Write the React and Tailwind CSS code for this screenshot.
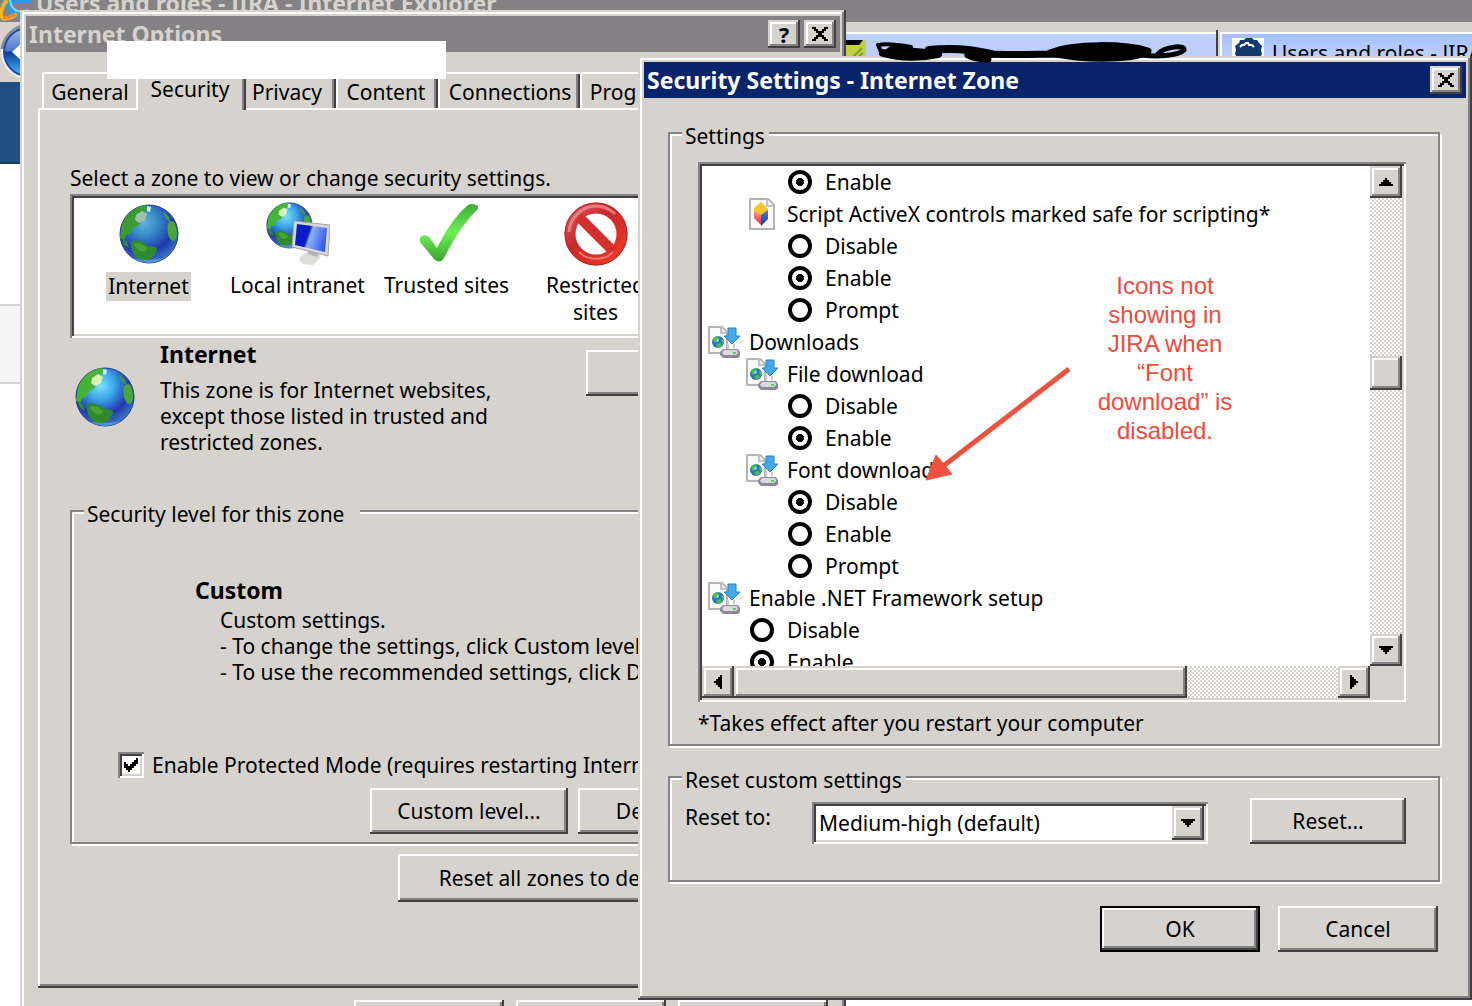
import { clsx } from 'clsx'

const raised = 'bg-[#d6d3ce] shadow-[inset_-2px_-2px_#424142,inset_2px_2px_#d6d3ce,inset_-4px_-4px_#848284,inset_4px_4px_#fff]'
const button = 'bg-[#d6d3ce] shadow-[inset_-2px_-2px_#424142,inset_2px_2px_#fff,inset_-4px_-4px_#848284]'
const sunken = 'shadow-[inset_2px_2px_#848284,inset_-2px_-2px_#fff,inset_4px_4px_#424142,inset_-4px_-4px_#d6d3ce]'
const track = 'bg-[repeating-conic-gradient(#fff_0_25%,#d6d3ce_0_50%)] bg-[length:4px_4px]'

const zones = [
  { name: 'Internet', Icon: Globe, active: true },
  { name: 'Local intranet', Icon: Intranet },
  { name: 'Trusted sites', Icon: Check },
  { name: 'Restricted sites', Icon: NoEntry },
]

const settings = [
  { depth: 2, label: 'Enable', group: 'initialize', checked: true },
  { depth: 1, label: 'Script ActiveX controls marked safe for scripting*', Icon: ActiveXIcon },
  { depth: 2, label: 'Disable', group: 'activex' },
  { depth: 2, label: 'Enable', group: 'activex', checked: true },
  { depth: 2, label: 'Prompt', group: 'activex' },
  { depth: 0, label: 'Downloads', Icon: DownloadIcon },
  { depth: 1, label: 'File download', Icon: DownloadIcon },
  { depth: 2, label: 'Disable', group: 'file' },
  { depth: 2, label: 'Enable', group: 'file', checked: true },
  { depth: 1, label: 'Font download', Icon: DownloadIcon },
  { depth: 2, label: 'Disable', group: 'font', checked: true },
  { depth: 2, label: 'Enable', group: 'font' },
  { depth: 2, label: 'Prompt', group: 'font' },
  { depth: 0, label: 'Enable .NET Framework setup', Icon: DownloadIcon },
  { depth: 1, label: 'Disable', group: 'dotnet' },
  { depth: 1, label: 'Enable', group: 'dotnet', checked: true },
]

const indents = ['pl-[6px]', 'pl-[44px]', 'pl-[82px]']

/* ---------- drawings ---------- */

function GlobeArt({ dim }) {
  const id = dim ? 'sea-dim' : 'sea'
  return (
    <>
      <defs>
        <radialGradient id={id} cx="0.42" cy="0.3" r="0.72">
          <stop offset="0" stopColor={dim ? '#5fb4dc' : '#7be4ff'} />
          <stop offset="0.35" stopColor={dim ? '#3486c4' : '#3aa2e6'} />
          <stop offset="0.7" stopColor="#2038b0" />
          <stop offset="1" stopColor="#3f7cc4" />
        </radialGradient>
      </defs>
      <circle cx="30" cy="30" r="29" fill={`url(#${id})`} stroke="#1f3f86" strokeWidth="1" />
      <path d="M3 21C6 11 15 3 26 1l4 3-5 4 3 5-6 3-2 5-6 3-3 6-4 1-2 5-4-2z" fill={dim ? '#3c9a32' : '#45b436'} />
      <path d="M17 11l6-4 5 3-2 6-6 3-4-3z" fill={dim ? '#a9c6b8' : '#ecf7c4'} opacity="0.9" />
      <path d="M12 38c5-3 11-1 16 3 4 2 9 1 10 4-1 6-7 12-14 12-8-3-13-10-12-19z" fill="#2f8a2e" />
      <path d="M15 40c4-2 9 0 13 4-2 6-10 4-13-4z" fill="#58b53a" opacity="0.6" />
      <path d="M49 19c4-4 7-2 8 4 2 6 1 12-2 14-5 1-8-10-6-18z" fill="#4ba53c" />
      <path d="M45 8l5 5 1 5-4-3-3-6z" fill="#3f9a4a" />
      <path d="M28 2l4 1-1 5-3-1z" fill="#d6ebf2" />
      <path d="M2 33l6 5 2 6-5-3z" fill="#2c8a3a" />
      <path d="M14 54c10 7 23 6 32 0-8 2-22 3-32 0z" fill="#5f9fe0" opacity="0.7" />
    </>
  )
}

function Globe({ dim = true }) {
  return (
    <svg className="w-[60px] h-[60px]" viewBox="0 0 60 60" aria-hidden="true">
      <GlobeArt dim={dim} />
    </svg>
  )
}

function Intranet() {
  return (
    <svg className="w-16 h-16" viewBox="0 0 64 64" aria-hidden="true">
      <defs>
        <linearGradient id="screen" x1="0" x2="1" y1="0.2" y2="0.5">
          <stop offset="0.42" stopColor="#0a1cc8" />
          <stop offset="0.5" stopColor="#8fb2ff" />
          <stop offset="1" stopColor="#3557e8" />
        </linearGradient>
      </defs>
      <g transform="scale(0.78)"><GlobeArt /></g>
      <path d="M35 54l8-5 10 2 1 5-7 7-10-1-4-4z" fill="#dcdcd8" />
      <path d="M42 46l12 3-3 6-9-3z" fill="#b9b6b6" />
      <path d="M28 19l36 4-2 31-36-9z" fill="#d9d6d6" stroke="#a7a2a4" />
      <path d="M31 22l30 4-2 24-30-7z" fill="url(#screen)" />
    </svg>
  )
}

function Check() {
  return (
    <svg className="w-16 h-16" viewBox="0 0 64 64" aria-hidden="true">
      <defs>
        <linearGradient id="tick" x1="0" x2="0" y1="0" y2="1">
          <stop offset="0" stopColor="#3fae34" />
          <stop offset="0.5" stopColor="#6cf058" />
          <stop offset="1" stopColor="#3aa32c" />
        </linearGradient>
      </defs>
      <path d="M5 36c2-4 6-3 9-1l8 11C30 30 40 14 52 4c3-3 8-2 11 0v3C48 21 38 39 29 56c-3 5-7 4-10 1L5 40z" fill="url(#tick)" />
    </svg>
  )
}

function NoEntry() {
  return (
    <svg className="w-16 h-16" viewBox="0 0 64 64" aria-hidden="true">
      <defs>
        <linearGradient id="ban" x1="0" x2="1" y1="0" y2="1">
          <stop offset="0" stopColor="#e0555a" />
          <stop offset="0.4" stopColor="#c8282c" />
          <stop offset="1" stopColor="#f03a24" />
        </linearGradient>
      </defs>
      <circle cx="32" cy="32" r="26" fill="none" stroke="url(#ban)" strokeWidth="11" />
      <path d="M15 15l34 34" stroke="#d42f2e" strokeWidth="10" />
      <circle cx="32" cy="32" r="31" fill="none" stroke="#b3262a" strokeWidth="1" />
      <path d="M5 30C6 16 17 5 31 4c8 0 15 3 20 8" fill="none" stroke="#ee9a9a" strokeWidth="3" opacity="0.7" />
      <path d="M15 50c9 9 25 9 34 0" fill="none" stroke="#f59086" strokeWidth="2" opacity="0.7" />
    </svg>
  )
}

function DownloadIcon() {
  return (
    <svg className="w-8 h-8" viewBox="0 0 32 32" aria-hidden="true">
      <path d="M1 1h13l5 5v21H1z" fill="#fbfbfb" stroke="#b5b5b5" strokeWidth="2" />
      <path d="M13 1v6h6" fill="#eee" stroke="#c4c4c4" strokeWidth="2" />
      <circle cx="10" cy="16" r="6" fill="#2a6fd0" />
      <circle cx="9" cy="14" r="2" fill="#8fd8f8" />
      <path d="M5 14c1-3 4-4 6-4l-2 4-2 3zM8 18l5-1 1 3-4 2zM14 12l2 3-1 3-2-3z" fill="#4cc43a" />
      <path d="M20 2h8v8h4l-8 8-8-8h4z" fill="#45a9ee" stroke="#2b84c8" />
      <path d="M20 18v5M26 18v4" stroke="#c9c9d2" strokeWidth="2" />
      <path d="M15 23h15l2 3v4l-2 2H15l-3-3v-3z" fill="#8d8a98" />
      <path d="M16 24h13l1 3-2 2H16l-2-2z" fill="#dcd9e2" />
      <path d="M25 26h3v2h-3z" fill="#4be02c" />
    </svg>
  )
}

function ActiveXIcon() {
  return (
    <svg className="w-[26px] h-8" viewBox="0 0 26 32" aria-hidden="true">
      <defs>
        <linearGradient id="ax-red" x1="0" x2="0" y1="0" y2="1">
          <stop offset="0" stopColor="#f4a08c" />
          <stop offset="1" stopColor="#dc2a34" />
        </linearGradient>
        <linearGradient id="ax-blue" x1="0" x2="0" y1="0" y2="1">
          <stop offset="0" stopColor="#4a80d8" />
          <stop offset="1" stopColor="#123a98" />
        </linearGradient>
      </defs>
      <path d="M1 1h18l6 6v24H1z" fill="#fbf8f8" stroke="#b4b4b4" strokeWidth="2" />
      <path d="M18 1v7h7" fill="#eee" stroke="#c4c4c4" strokeWidth="2" />
      <path d="M12 4l7 7v4l-7 3-7-4v-4z" fill="#f9c62e" />
      <path d="M5 13l7 4v10l-7-7z" fill="url(#ax-red)" />
      <path d="M19 12v9l-7 7V17z" fill="url(#ax-blue)" />
    </svg>
  )
}

function Triangle({ className }) {
  return (
    <svg className={clsx('w-[14px] h-2', className)} viewBox="0 0 14 8" shapeRendering="crispEdges" aria-hidden="true">
      <path d="M6 0h2v2h2v2h2v2h2v2H0V6h2V4h2V2h2z" />
    </svg>
  )
}

function CloseGlyph() {
  return (
    <svg className="w-4 h-[14px]" viewBox="0 0 16 14" shapeRendering="crispEdges" aria-hidden="true">
      <path d="M0 0h4v2h2v2h4V2h2V0h4v2h-2v2h-2v2h-2v2h2v2h2v2h2v2h-4v-2h-2v-2H6v2H4v2H0v-2h2v-2h2V8h2V6H4V4H2V2H0z" />
    </svg>
  )
}

/* ---------- small parts ---------- */

function TitleButton({ label, children }) {
  return (
    <button aria-label={label} className={clsx(raised, 'flex w-8 h-7 items-center justify-center text-[22px] font-bold text-black')}>
      {children}
    </button>
  )
}

function PushButton({ className, children, ...rest }) {
  return (
    <button className={clsx(button, 'min-h-[46px] shrink-0 whitespace-nowrap', className)} {...rest}>
      {children}
    </button>
  )
}

function GroupBox({ title, legendClass, className, children }) {
  return (
    <fieldset className={clsx('relative min-w-0 border-2 border-[#848284] shadow-[2px_2px_#fff,inset_2px_2px_#fff]', className)}>
      <legend className={clsx('absolute left-3 -top-[11px] bg-[#d6d3ce] pl-[3px] leading-[26px]', legendClass)}>{title}</legend>
      {children}
    </fieldset>
  )
}

function Tab({ className, active, children }) {
  return (
    <button
      role="tab"
      aria-selected={!!active}
      className={clsx(
        'shrink-0 border-white border-t-2 bg-[#d6d3ce]',
        active ? 'relative -my-[2px] h-10 border-l-2 pb-1 pr-1' : 'h-9 rounded-tl-[3px] pt-[2px]',
        className,
      )}
    >
      {children}
    </button>
  )
}

/* ---------- browser behind the dialogs ---------- */

function Browser() {
  return (
    <div className="flex h-full flex-col bg-white">
      <div className="flex h-[22px] shrink-0 overflow-hidden bg-[#848284]">
        <svg className="w-9 h-[22px] shrink-0" viewBox="0 0 36 22" aria-hidden="true">
          <path d="M8 0c0 14 12 19 22 12M10 1h22" fill="none" stroke="#2f9be0" strokeWidth="6" />
          <path d="M10 0c1 10 9 14 18 10" fill="none" stroke="#7fd6fb" strokeWidth="2" />
          <path d="M7 0C1 8-1 16 3 18c3 2 9-1 14-4" fill="none" stroke="#f7b420" strokeWidth="4" />
          <path d="M3 17c3 1 8 0 12-3" fill="none" stroke="#f0882a" strokeWidth="3" />
        </svg>
        <span className="whitespace-nowrap text-[23px] font-bold leading-[6px] text-[#d6d3ce]">
          Users and roles - JIRA - Internet Explorer
        </span>
      </div>

      <div className="flex h-[60px] shrink-0 bg-[#d6d3ce]">
        <svg className="w-14 h-[58px] shrink-0" viewBox="0 0 56 58" aria-hidden="true">
          <defs>
            <linearGradient id="back" x1="0" x2="0" y1="0" y2="1">
              <stop offset="0" stopColor="#a8c0e8" />
              <stop offset="0.48" stopColor="#4a78c8" />
              <stop offset="0.5" stopColor="#0a3a9c" />
              <stop offset="1" stopColor="#4cc4fa" />
            </linearGradient>
          </defs>
          <circle cx="28" cy="30" r="27" fill="#f4f4f6" />
          <path d="M2 27C4 14 14 4 28 3" fill="none" stroke="#8c8c8c" strokeWidth="3" />
          <circle cx="28" cy="30" r="24" fill="url(#back)" stroke="#1c4ba8" strokeWidth="2" />
          <path d="M12 30l14-13v8h16v10H26v8z" fill="#fff" />
        </svg>
        <div className="ml-[789px] mt-2 flex flex-1">
          <div className="mt-[2px] flex w-[371px] shrink-0 border-t-2 border-white bg-[#bccffc]">
            <svg className="mt-[6px] w-[21px] h-6" viewBox="0 0 21 24" aria-hidden="true">
              <path d="M0 0h21v24H0z" fill="#c3cf45" />
              <path d="M0 0h18l-4 5H0z" />
              <path d="M7 18l10-10M12 18l6-5" stroke="#7f9c2a" strokeWidth="2" />
            </svg>
          </div>
          <div className="w-1 border-l-2 border-[#424142]" />
          <div className="mt-[2px] flex flex-1 overflow-hidden border-l-2 border-t-2 border-white bg-gradient-to-b from-[#a3bffb] to-[#dce6ff] pl-[10px]">
            <svg className="mt-1 w-8 h-7 shrink-0" viewBox="0 0 32 28" aria-hidden="true">
              <path d="M0 0h32v28H0z" fill="#fff" />
              <path d="M3 8l4-3 1-3h4l2-2h6l2 2h3l2 3 3 3-1 4 1 4-3 5H6l-3-5 1-4z" fill="#133a6c" />
              <path d="M8 9l2-2h2l2-2h2l1 2h3l2 2" fill="none" stroke="#fff" strokeWidth="2" />
            </svg>
            <span className="ml-2 whitespace-nowrap leading-[38px]">Users and roles - JIRA</span>
          </div>
        </div>
      </div>

      <div className="h-[82px] shrink-0 border-b-2 border-[#243c58] bg-[#205081]" />
      <div className="mt-[140px] h-20 shrink-0 border-y-2 border-[#d2d2d2] bg-[#f5f5f5]" />
    </div>
  )
}

/* ---------- dialogs ---------- */

const tabEdge = 'shadow-[inset_-2px_0_#424142,inset_-4px_0_#848284]'

function InternetOptions() {
  return (
    <section aria-label="Internet Options" className={clsx(raised, 'absolute left-5 top-[10px] w-[826px] p-[6px]')}>
      <header className="flex h-9 items-center bg-[#848284] pl-[3px] pr-1">
        <h2 className="flex-1 text-[23px] font-bold text-[#d6d3ce]">Internet Options</h2>
        <div className="flex gap-1">
          <TitleButton label="Help">?</TitleButton>
          <TitleButton label="Close"><CloseGlyph /></TitleButton>
        </div>
      </header>

      <div className="px-3 pb-3 pt-5">
        <div role="tablist" className="flex pl-1">
          <Tab className="w-[94px] border-l-2">General</Tab>
          <Tab active className={clsx(tabEdge, 'w-[110px]')}>Security</Tab>
          <Tab className={clsx(tabEdge, 'w-[90px] pr-2')}>Privacy</Tab>
          <Tab className={clsx(tabEdge, 'w-[102px] border-l-2 pr-1')}>Content</Tab>
          <Tab className={clsx(tabEdge, 'w-[142px] border-l-2')}>Connections</Tab>
          <Tab className={clsx(tabEdge, 'w-[114px] border-l-2')}>Programs</Tab>
          <Tab className={clsx(tabEdge, 'w-[114px] border-l-2')}>Advanced</Tab>
        </div>

        <div className={clsx(button, 'pb-[86px] pl-8 pr-[30px] pt-[57px]')}>
          <p className="leading-[26px]">Select a zone to view or change security settings.</p>

          <div className={clsx(sunken, 'mt-[3px] flex h-36 bg-white px-1 pt-2')}>
            {zones.map(({ name, Icon, active }) => (
              <button key={name} className="flex w-[149px] flex-col items-center">
                <span className="flex h-16 items-center"><Icon /></span>
                <span className={clsx('mt-[6px] px-[2px] text-center', active ? 'bg-[#d6d3ce] leading-[29px]' : 'leading-[27px]', name === 'Restricted sites' && 'w-28')}>
                  {name}
                </span>
              </button>
            ))}
          </div>

          <div className="flex">
            <div className="w-[90px] pl-[5px] pt-[29px]"><Globe dim={false} /></div>
            <div className="w-[426px]">
              <h3 className="text-[23px] font-bold leading-[32px]">Internet</h3>
              <p className="mt-[7px] w-[340px] leading-[26px]">
                This zone is for Internet websites, except those listed in trusted and restricted zones.
              </p>
            </div>
            <PushButton className="mt-3 w-[190px] self-start" aria-label="Sites" />
          </div>

          <GroupBox title="Security level for this zone" legendClass="pr-4" className="mt-[55px] pb-2 pt-[65px]">
            <h3 className="pl-[123px] text-[23px] font-bold leading-[26px]">Custom</h3>
            <div className="mt-1 whitespace-nowrap pl-[148px] leading-[26px]">
              <p>Custom settings.</p>
              <p>- To change the settings, click Custom level.</p>
              <p>- To use the recommended settings, click Default level.</p>
            </div>
            <div className="mt-[67px] flex h-[26px] items-center pl-[46px]">
              <span className="relative flex">
                <input id="protected-mode" type="checkbox" defaultChecked className={clsx(sunken, 'h-[26px] w-[26px] appearance-none bg-white')} />
                <svg className="pointer-events-none absolute left-[6px] top-[6px] h-[14px] w-[14px]" viewBox="0 0 14 14" shapeRendering="crispEdges" aria-hidden="true">
                  <path d="M0 4h2v2h2v2h2V6h2V4h2V2h2V0h2v6h-2v2h-2v2H8v2H6v2H4v-2H2v-2H0z" />
                </svg>
              </span>
              <label htmlFor="protected-mode" className="ml-2 whitespace-nowrap leading-[26px]">
                Enable Protected Mode (requires restarting Internet Explorer)
              </label>
            </div>
            <div className="mt-[10px] flex gap-[10px] pl-[298px]">
              <PushButton className="w-[198px]">Custom level...</PushButton>
              <PushButton className="w-[198px]">Default level</PushButton>
            </div>
          </GroupBox>

          <PushButton className="ml-[328px] mt-[10px] h-12 w-[378px]">Reset all zones to default level</PushButton>
        </div>

        <div className="mt-3 flex justify-end gap-3">
          <PushButton className="w-[150px]">OK</PushButton>
          <PushButton className="w-[150px]">Cancel</PushButton>
          <PushButton className="w-[150px]">Apply</PushButton>
        </div>
      </div>
    </section>
  )
}

function SettingRow({ id, depth, label, Icon, group, checked }) {
  return (
    <li className={clsx('flex h-8 items-center', indents[depth])}>
      <span className="mr-[9px] flex w-8 justify-center">
        {Icon ? <Icon /> : (
          <input
            id={id}
            type="radio"
            name={group}
            defaultChecked={checked}
            className="h-6 w-6 appearance-none rounded-full border-4 border-black bg-white checked:bg-[radial-gradient(circle,#000_4px,#fff_4px)]"
          />
        )}
      </span>
      {Icon ? <span>{label}</span> : <label htmlFor={id}>{label}</label>}
    </li>
  )
}

function ScrollButton({ label, className }) {
  return (
    <button aria-label={label} className={clsx(raised, 'flex h-8 w-8 shrink-0 items-center justify-center')}>
      <Triangle className={className} />
    </button>
  )
}

function SettingsList() {
  return (
    <div className={clsx(sunken, 'bg-white p-1')}>
      <div className="flex h-[500px]">
        <ul className="flex-1 overflow-hidden whitespace-nowrap">
          {settings.map((row, i) => <SettingRow key={i} id={`setting-${i}`} {...row} />)}
        </ul>
        <div className={clsx(track, 'flex w-8 flex-col')}>
          <ScrollButton label="Scroll up" />
          <div className={clsx(raised, 'mt-[158px] h-[34px]')} />
          <div className="flex-1" />
          <ScrollButton label="Scroll down" className="rotate-180" />
        </div>
      </div>
      <div className="flex bg-[#d6d3ce] pr-8">
        <ScrollButton label="Scroll left" className="-rotate-90" />
        <div className={clsx(track, 'flex flex-1')}>
          <div className={clsx(raised, 'h-8 w-3/4')} />
        </div>
        <ScrollButton label="Scroll right" className="rotate-90" />
      </div>
    </div>
  )
}

function SecuritySettings() {
  return (
    <section aria-label="Security Settings" className={clsx(raised, 'absolute left-[638px] right-0 top-14 p-[6px]')}>
      <header className="flex h-9 items-center bg-[#08246b] pl-[3px] pr-1">
        <h2 className="flex-1 text-[23px] font-bold text-white">Security Settings - Internet Zone</h2>
        <TitleButton label="Close"><CloseGlyph /></TitleButton>
      </header>

      <div className="pb-[42px] pl-6 pr-[26px] pt-[34px]">
        <GroupBox title="Settings" legendClass="pr-1" className="pb-2 pl-7 pr-8 pt-7">
          <SettingsList />
          <p className="mt-2 leading-[26px]">*Takes effect after you restart your computer</p>
        </GroupBox>

        <GroupBox title="Reset custom settings" legendClass="pr-1" className="mt-[30px] pb-9 pl-[15px] pr-8 pt-5">
          <div className="flex items-end">
            <label htmlFor="reset-to" className="w-[127px] self-start leading-[38px]">Reset to:</label>
            <div className={clsx(sunken, 'relative mr-[42px] flex h-[42px] flex-1 bg-white p-1')}>
              <select id="reset-to" className="flex-1 appearance-none bg-transparent pl-[3px]">
                <option>Medium-high (default)</option>
              </select>
              <span className={clsx(raised, 'pointer-events-none absolute right-1 top-1 flex h-[34px] w-8 items-center justify-center')}>
                <Triangle className="rotate-180" />
              </span>
            </div>
            <PushButton className="w-[156px]">Reset...</PushButton>
          </div>
        </GroupBox>

        <div className="mt-6 flex justify-end gap-[18px] pr-[2px]">
          <div className="border-2 border-black">
            <button className={clsx(button, 'block h-[42px] w-[156px]')}>OK</button>
          </div>
          <PushButton className="w-40">Cancel</PushButton>
        </div>
      </div>
    </section>
  )
}

/* ---------- hand-made marks over the windows ---------- */

function Annotations() {
  return (
    <>
      <div className="absolute left-[107px] top-[41px] h-[38px] w-[339px] bg-white" />
      <svg className="pointer-events-none absolute left-[870px] top-9 h-7 w-[322px]" viewBox="0 0 322 28" aria-hidden="true">
        <g fill="none" stroke="#000" strokeLinecap="round" strokeLinejoin="round">
          <path d="M8 9c10-2 22 0 33 2M8 9l4 9 10-6" strokeWidth="4" />
          <path d="M13 17c18 5 36 5 55 1l-46-4" strokeWidth="8" />
          <path d="M59 14c20-2 42-1 62 4" strokeWidth="8" />
          <path d="M98 19c7 4 14 4 20 4l-12-6" strokeWidth="7" />
          <path d="M105 17c30 3 60 1 90 1" strokeWidth="7" />
          <path d="M180 17c25-10 75-9 98-2-12 9-60 9-92 3l88-4-70 1" strokeWidth="7" />
          <path d="M272 19c14 2 36 1 42-5 1-6-20-3-26 4" strokeWidth="5" />
        </g>
      </svg>
      <svg className="pointer-events-none absolute left-[924px] top-[364px] h-[120px] w-[150px]" viewBox="0 0 150 120" aria-hidden="true">
        <path d="M145 5L18 103" stroke="#ee5140" strokeWidth="5" />
        <path d="M2 116l10-25 16 19z" fill="#ee5140" stroke="#ee5140" />
      </svg>
      <p className="absolute left-[1090px] top-[271px] w-[150px] text-center font-['Liberation_Sans',sans-serif] text-2xl leading-[29px] text-[#eb4d3d]">
        Icons not showing in JIRA when “Font download” is disabled.
      </p>
    </>
  )
}

export default function App() {
  return (
    <div className="relative h-screen overflow-hidden font-['Noto_Sans',sans-serif] text-[21px] leading-[26px] text-black">
      <Browser />
      <InternetOptions />
      <SecuritySettings />
      <Annotations />
    </div>
  )
}
